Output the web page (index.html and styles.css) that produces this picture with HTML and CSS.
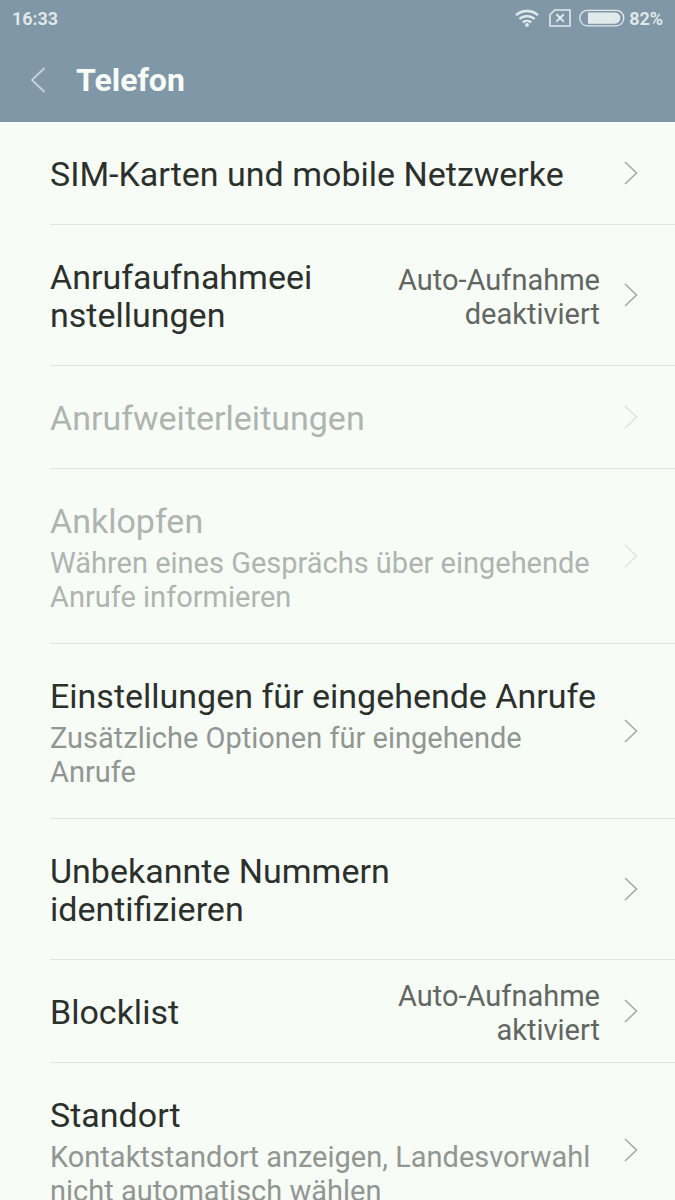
FILE: index.html
```html
<!DOCTYPE html>
<html lang="de">
    <head>
        <meta charset="UTF-8" />
        <meta name="viewport" content="width=device-width, initial-scale=1.0" />
        <title>Telefon</title>
        <link rel="stylesheet" href="styles.css">
    </head>
    <body>
        <header class="header">
            <div class="status-bar">
                <span>16:33</span>
                <div class="status-icons">
                    <svg class="wifi" width="24" height="18" viewBox="0 0 24 18" fill="none" stroke="currentColor" stroke-width="2.3">
                        <path d="M1 6.2a16.5 16.5 0 0 1 22 0" />
                        <path d="M4.4 10a11.4 11.4 0 0 1 15.2 0" />
                        <path d="M7.8 13.4a6.4 6.4 0 0 1 8.4 0" />
                        <circle cx="12" cy="15.9" r="1.9" fill="currentColor" stroke="none" />
                    </svg>
                    <svg class="sim" width="22" height="18" viewBox="0 0 22 18" fill="none" stroke="currentColor" stroke-width="1.6">
                        <path d="M5.8 1H21v16H1V5.8z" stroke-linejoin="round" />
                        <path d="M7.4 5.2l7.4 7.4M14.8 5.2l-7.4 7.4" stroke-width="2" />
                    </svg>
                    <svg class="battery" width="46" height="18" viewBox="0 0 46 18">
                        <rect x="0.8" y="1.3" width="44" height="15.6" rx="7.8" fill="none" stroke="currentColor" stroke-width="1.3" />
                        <path d="M9 3.5h26.8a5.6 5.6 0 0 1 0 11.2H9z" fill="currentColor" />
                    </svg>
                    <span>82%</span>
                </div>
            </div>
            <div class="title-bar">
                <button class="back" aria-label="Zurück">
                    <svg width="16" height="26" viewBox="0 0 16 26" fill="none" stroke="currentColor" stroke-width="1.8">
                        <path d="M14.5 1L2 13l12.5 12" />
                    </svg>
                </button>
                <h1>Telefon</h1>
            </div>
        </header>

        <main class="settings">
            <ul>
                <li>
                    <button class="item">
                        <span class="text"><span class="name">SIM-Karten und mobile Netzwerke</span></span>
                        <svg class="arrow" viewBox="0 0 14 24"><path d="M1 1l11.5 11L1 23" /></svg>
                    </button>
                </li>
                <li>
                    <button class="item">
                        <span class="text"><span class="name">Anrufaufnahmeeinstellungen</span></span>
                        <span class="value">Auto-Aufnahme deaktiviert</span>
                        <svg class="arrow" viewBox="0 0 14 24"><path d="M1 1l11.5 11L1 23" /></svg>
                    </button>
                </li>
                <li>
                    <button class="item" disabled>
                        <span class="text"><span class="name">Anrufweiterleitungen</span></span>
                        <svg class="arrow" viewBox="0 0 14 24"><path d="M1 1l11.5 11L1 23" /></svg>
                    </button>
                </li>
                <li>
                    <button class="item" disabled>
                        <span class="text">
                            <span class="name">Anklopfen</span>
                            <span class="summary">Währen eines Gesprächs über eingehende Anrufe informieren</span>
                        </span>
                        <svg class="arrow" viewBox="0 0 14 24"><path d="M1 1l11.5 11L1 23" /></svg>
                    </button>
                </li>
                <li>
                    <button class="item">
                        <span class="text">
                            <span class="name">Einstellungen für eingehende Anrufe</span>
                            <span class="summary">Zusätzliche Optionen für eingehende Anrufe</span>
                        </span>
                        <svg class="arrow" viewBox="0 0 14 24"><path d="M1 1l11.5 11L1 23" /></svg>
                    </button>
                </li>
                <li>
                    <button class="item">
                        <span class="text"><span class="name">Unbekannte Nummern<br>identifizieren</span></span>
                        <svg class="arrow" viewBox="0 0 14 24"><path d="M1 1l11.5 11L1 23" /></svg>
                    </button>
                </li>
                <li>
                    <button class="item">
                        <span class="text"><span class="name">Blocklist</span></span>
                        <span class="value">Auto-Aufnahme aktiviert</span>
                        <svg class="arrow" viewBox="0 0 14 24"><path d="M1 1l11.5 11L1 23" /></svg>
                    </button>
                </li>
                <li>
                    <button class="item">
                        <span class="text">
                            <span class="name">Standort</span>
                            <span class="summary">Kontaktstandort anzeigen, Landesvorwahl nicht automatisch wählen</span>
                        </span>
                        <svg class="arrow" viewBox="0 0 14 24"><path d="M1 1l11.5 11L1 23" /></svg>
                    </button>
                </li>
            </ul>
        </main>
    </body>
</html>
```
FILE: styles.css
```css
* {
    margin: 0;
    padding: 0;
    box-sizing: border-box;
    font-family: Roboto, sans-serif;
}

body {
    height: 100vh;
    background: #f7fcf7;
    display: flex;
    flex-direction: column;
}

.header {
    background: #8097a8;
    color: #f7fcf7;
}

.status-bar {
    display: flex;
    justify-content: space-between;
    align-items: center;
    height: 38px;
    padding: 0 12px 2px;
    font-size: 18px;
    font-weight: 600;
    color: #e2ebeb;
}

.status-icons {
    display: flex;
    align-items: center;
}

.wifi {
    margin-right: 10px;
}

.sim {
    margin-right: 8px;
}

.battery {
    margin-right: 4px;
}

.title-bar {
    display: flex;
    align-items: center;
    height: 84px;
    padding: 0 30px;
    gap: 30px;
}

.back {
    display: flex;
    border: none;
    background: none;
    color: #c5d2da;
    cursor: pointer;
}

h1 {
    font-size: 32px;
    font-weight: 700;
}

.settings {
    flex: 1;
    min-height: 0;
    overflow-y: auto;
    scrollbar-width: none;
}

ul {
    list-style: none;
    padding-left: 50px;
}

li {
    border-bottom: 1px solid #dee4de;
}

.item {
    display: flex;
    align-items: center;
    width: 100%;
    padding-right: 37px;
    border: none;
    background: none;
    text-align: left;
    color: #2c302c;
    cursor: pointer;
}

.text {
    flex: 1;
    min-width: 0;
    padding: 33px 0 31px;
}

.name,
.summary {
    display: block;
    overflow-wrap: anywhere;
}

.name {
    font-size: 34px;
    line-height: 38px;
}

.summary {
    margin: 6px 0 -2px;
    font-size: 29px;
    line-height: 34px;
    color: #929692;
}

.value {
    flex: 0 0 50%;
    max-width: 275px;
    padding-top: 4px;
    font-size: 29px;
    line-height: 34px;
    text-align: right;
    color: #626662;
}

.arrow {
    flex: none;
    width: 14px;
    height: 24px;
    margin-left: 24px;
    fill: none;
    stroke: #a6aba6;
    stroke-width: 1.6;
}

.item:disabled,
.item:disabled .summary {
    color: #b0b4b0;
    cursor: default;
}

.item:disabled .arrow {
    stroke: #dfe4df;
}
```
